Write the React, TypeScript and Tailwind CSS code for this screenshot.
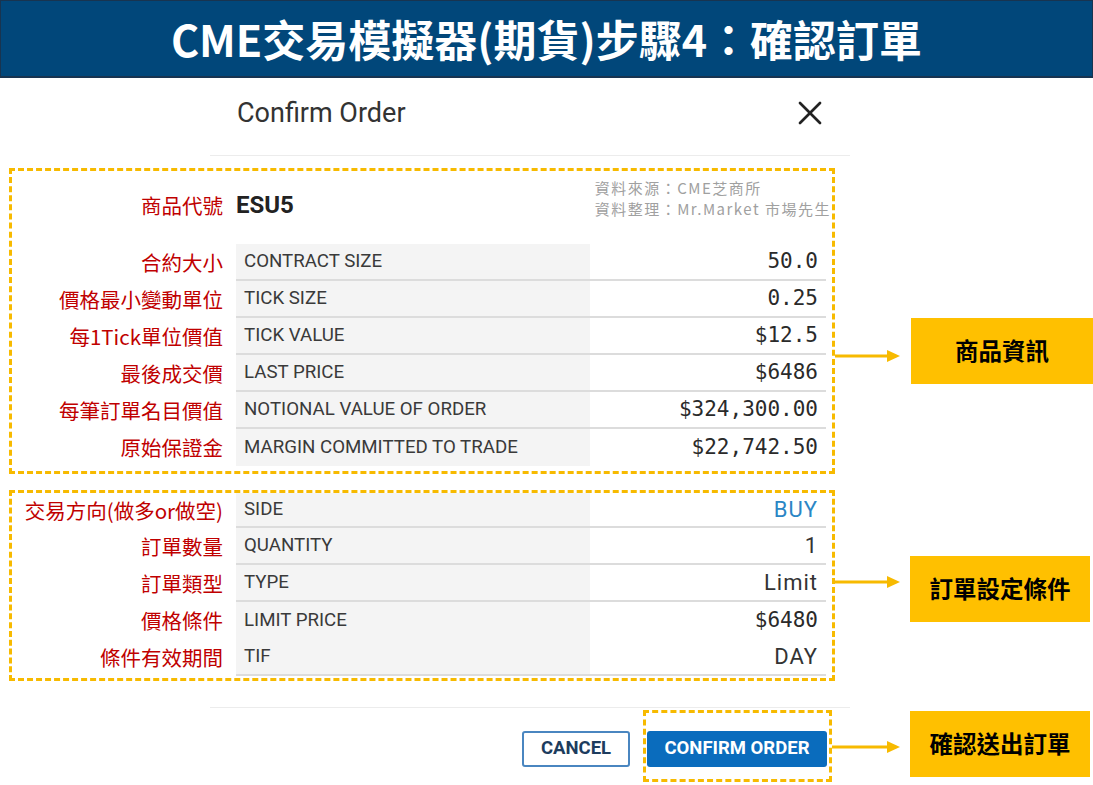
import { X } from "lucide-react"

const cjk = "font-['Noto_Sans_CJK_TC','Noto_Sans',sans-serif]"
const mono = "font-['DejaVu_Sans_Mono','Liberation_Mono',monospace]"

interface Row {
  label: string
  name: string
  value: string
  kind?: "mono" | "text" | "buy"
  h?: string
  line?: boolean
}

const productRows: Row[] = [
  { label: "合約大小", name: "CONTRACT SIZE", value: "50.0", line: true },
  { label: "價格最小變動單位", name: "TICK SIZE", value: "0.25", line: true },
  { label: "每1Tick單位價值", name: "TICK VALUE", value: "$12.5", line: true },
  { label: "最後成交價", name: "LAST PRICE", value: "$6486", line: true },
  { label: "每筆訂單名目價值", name: "NOTIONAL VALUE OF ORDER", value: "$324,300.00", line: true },
  { label: "原始保證金", name: "MARGIN COMMITTED TO TRADE", value: "$22,742.50" },
]

const orderRows: Row[] = [
  { label: "交易方向(做多or做空)", name: "SIDE", value: "BUY", kind: "buy", h: "h-[35px]", line: true },
  { label: "訂單數量", name: "QUANTITY", value: "1", kind: "text", line: true },
  { label: "訂單類型", name: "TYPE", value: "Limit", kind: "text", line: true },
  { label: "價格條件", name: "LIMIT PRICE", value: "$6480" },
  { label: "條件有效期間", name: "TIF", value: "DAY", kind: "text", line: true },
]

function Arrow({ width }: { width: number }) {
  return (
    <svg width={width} height="14" viewBox={`0 0 ${width} 14`} className="shrink-0">
      <line x1="0" y1="7" x2={width - 11} y2="7" stroke="#F7BA00" strokeWidth="3" />
      <polygon points={`${width - 13},1 ${width},7 ${width - 13},13`} fill="#F7BA00" />
    </svg>
  )
}

function Callout({ text, w }: { text: string; w: string }) {
  return (
    <div
      className={`${w} h-[66px] shrink-0 bg-[#FFC000] flex items-center justify-center text-[23.5px] font-bold text-black ${cjk}`}
    >
      {text}
    </div>
  )
}

function TableRow({ row }: { row: Row }) {
  const valueClass =
    row.kind === "buy"
      ? "font-['Roboto',sans-serif] text-[22px] tracking-[1px] text-[#2b86c5]"
      : row.kind === "text"
        ? "font-['Roboto',sans-serif] text-[22px] tracking-[1px] text-[#333]"
        : `${mono} text-[21px] text-[#2a2a2a]`
  return (
    <div className={`flex ${row.h ?? "h-[37px]"}`}>
      <div
        className={`w-[211px] shrink-0 flex items-center justify-end whitespace-nowrap text-[20.5px] text-[#c00000] ${cjk}`}
      >
        {row.label}
      </div>
      <div
        className={`ml-[13px] w-[590px] flex ${row.line ? "border-b-2 border-[#dcdcdc]" : ""}`}
      >
        <div className="w-[354px] bg-[#f4f4f4] flex items-center pl-[8px] text-[18.7px] text-[#3a3a3a] font-['Roboto',sans-serif]">
          {row.name}
        </div>
        <div className={`flex-1 flex items-center justify-end pr-[8px] ${valueClass}`}>{row.value}</div>
      </div>
    </div>
  )
}

export default function App() {
  return (
    <div className="w-[1093px] h-[785px] bg-white overflow-hidden font-['Roboto',sans-serif]">
      <div
        className={`h-[78px] bg-[#01477a] border border-[#183450] border-b-2 flex items-center justify-center text-white text-[43px] font-bold ${cjk}`}
      >
        CME交易模擬器(期貨)步驟4：確認訂單
      </div>

      <div className="ml-[210px] w-[640px] h-[70px] flex items-center justify-between pl-[27px] pr-[20px]">
        <span className="text-[27px] text-[#333]">Confirm Order</span>
        <X size={40} strokeWidth={1.6} className="text-[#222]" />
      </div>
      <div className="ml-[210px] mt-[7px] w-[640px] h-px bg-[#ececec]" />

      <div className="mt-[12px] flex">
        <div className="ml-[9px] w-[826px] h-[306px] shrink-0 border-[3px] border-dashed border-[#F7BA00]">
          <div className="flex h-[73px]">
            <div className={`w-[211px] shrink-0 pt-[20px] text-right leading-[28px] text-[20.5px] text-[#c00000] ${cjk}`}>
              商品代號
            </div>
            <div className="ml-[13px] pt-[20px] leading-[28px] text-[24px] font-bold text-[#222]">ESU5</div>
            <div
              className={`ml-auto pt-[6px] pr-[1px] text-[15px] tracking-[1.5px] text-[#a0a0a0] whitespace-nowrap ${cjk}`}
            >
              <div className="h-[21px] leading-[21px]">資料來源：CME芝商所</div>
              <div className="h-[21px] leading-[21px]">資料整理：Mr.Market 市場先生</div>
            </div>
          </div>
          {productRows.map((r) => (
            <TableRow key={r.name} row={r} />
          ))}
        </div>
        <div className="pt-[150px] flex items-start">
          <div className="mt-[31px]">
            <Arrow width={65} />
          </div>
          <div className="ml-[11px]">
            <Callout text="商品資訊" w="w-[182px]" />
          </div>
        </div>
      </div>

      <div className="mt-[16px] flex">
        <div className="ml-[9px] w-[826px] h-[191px] shrink-0 border-[3px] border-dashed border-[#F7BA00] pb-[2px]">
          {orderRows.map((r) => (
            <TableRow key={r.name} row={r} />
          ))}
        </div>
        <div className="pt-[66px] flex items-start">
          <div className="mt-[19px]">
            <Arrow width={65} />
          </div>
          <div className="ml-[10px]">
            <Callout text="訂單設定條件" w="w-[180px]" />
          </div>
        </div>
      </div>

      <div className="ml-[210px] mt-[26px] w-[640px] h-px bg-[#ececec]" />

      <div className="mt-[2px] flex items-start">
        <div className="w-[832px] shrink-0 flex items-start justify-end">
          <button className="mt-[21px] mr-[13px] w-[108px] h-[36px] rounded-[3px] border-2 border-[#4a86c0] bg-white text-[18.5px] font-bold text-[#1d3c5e]">
            CANCEL
          </button>
          <div className="border-[3px] border-dashed border-[#F7BA00] pt-[18px] pb-[12px] pl-[1px] pr-[2px]">
            <button className="w-[180px] h-[36px] rounded-[3px] bg-[#0a6cbd] text-[18.5px] font-bold text-white">
              CONFIRM ORDER
            </button>
          </div>
        </div>
        <div className="mt-[30px]">
          <Arrow width={68} />
        </div>
        <div className="ml-[10px] mt-[1px]">
          <Callout text="確認送出訂單" w="w-[180px]" />
        </div>
      </div>
    </div>
  )
}
